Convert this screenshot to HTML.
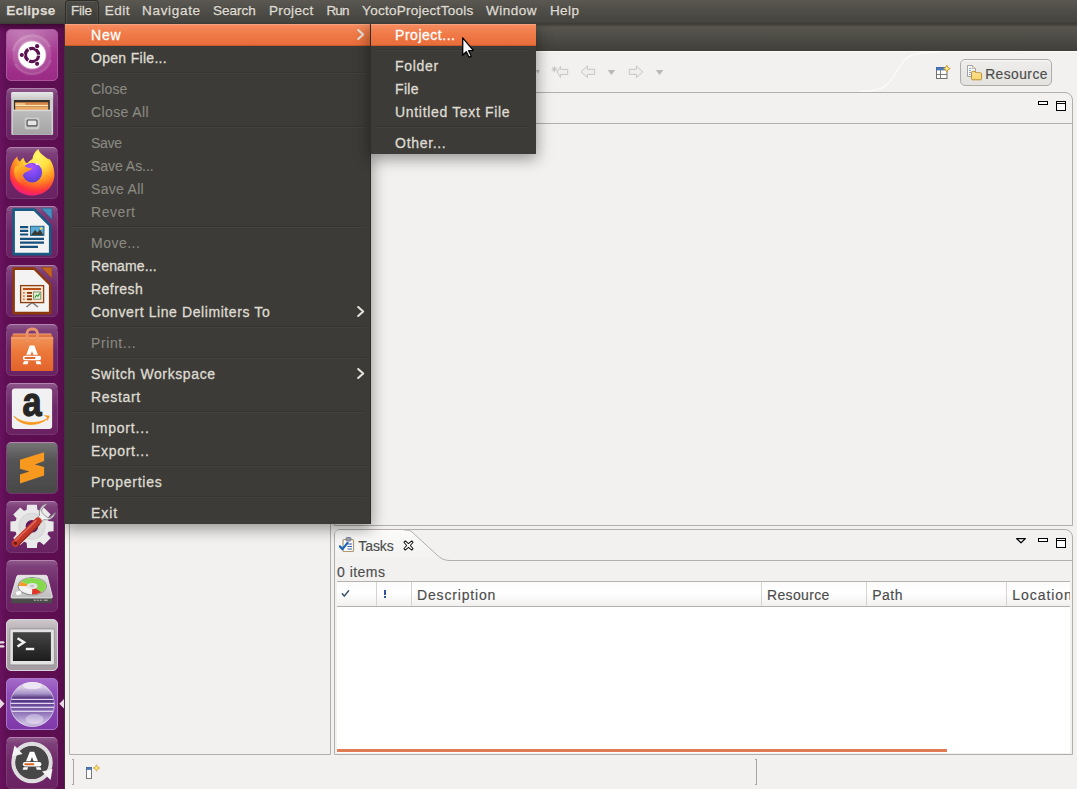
<!DOCTYPE html>
<html><head><meta charset="utf-8"><title>Eclipse</title>
<style>
*{box-sizing:border-box;margin:0;padding:0}
html,body{width:1077px;height:789px;overflow:hidden}
body{position:relative;background:#f2f1f0;font-family:"Liberation Sans",sans-serif}
.t{position:absolute;white-space:nowrap;line-height:20px;height:20px;-webkit-text-stroke:.3px}
#panel{z-index:5;position:absolute;left:0;top:0;width:1077px;height:24px;background:linear-gradient(#5a5851 0,#504e48 40%,#45443e 92%,#3a3934 100%)}
#panel .t{text-shadow:0 -1px 0 rgba(0,0,0,.35)}
#filetab{position:absolute;left:65px;top:0;width:34px;height:24px;border:1px solid #2e2d2a;border-bottom:0;border-radius:4px 4px 0 0;background:linear-gradient(#4b4a44,#3c3b37);box-shadow:inset 1px 1px 0 rgba(255,255,255,.08),inset -1px 0 0 rgba(255,255,255,.05)}
#launcher{z-index:5;position:absolute;left:0;top:24px;width:65px;height:765px;background:linear-gradient(rgba(40,5,32,.55) 0,rgba(40,5,32,0) 7px),linear-gradient(90deg,#6a1260 0,#5e0f53 6px,#5c0e50 58px,#560d4a 64px);border-right:1px solid #43303f}
.tile{position:absolute;left:6px;width:52px;height:52px;border-radius:5px;overflow:hidden}
#win{position:absolute;left:0;top:0;width:1077px;height:789px}
#win div,#win svg{position:absolute}
#win .t{-webkit-text-stroke:.15px}
#menu{position:absolute;left:65px;top:24px;width:306px;height:500px;background:#3c3b37;box-shadow:0 4px 14px 1px rgba(0,0,0,.38);border-right:1px solid #2f2e2b}
#submenu{position:absolute;left:370px;top:24px;width:166px;height:130px;background:#3c3b37;box-shadow:0 4px 14px 1px rgba(0,0,0,.38);border-left:1px solid #2f2e2b}
.hl{position:absolute;height:22px;background:linear-gradient(#f58b5e 0,#f07a48 45%,#e86d3a 100%);border-top:1px solid #f6a27e;border-bottom:1px solid #c85a2c}
.sep{position:absolute;height:2px;background:linear-gradient(#363531 1px,#43423e 1px)}
.d{-webkit-text-stroke:.1px}
.chev{position:absolute;width:8px;height:11px;overflow:visible}
.chev path{fill:none;stroke:#e6e2da;stroke-width:2.1;stroke-linecap:round;stroke-linejoin:round}
</style></head><body>
<div id="panel"><div id="filetab"></div><span class="t" style="left:6.2px;top:0.8px;font-size:13.5px;letter-spacing:0.29px;color:#dfdbd2;font-weight:bold;">Eclipse</span><span class="t" style="left:71.1px;top:0.8px;font-size:13.5px;letter-spacing:-0.28px;color:#dfdbd2;">File</span><span class="t" style="left:104.8px;top:0.8px;font-size:13.5px;letter-spacing:0.48px;color:#dfdbd2;">Edit</span><span class="t" style="left:142.1px;top:0.8px;font-size:13.5px;letter-spacing:0.67px;color:#dfdbd2;">Navigate</span><span class="t" style="left:212.9px;top:0.8px;font-size:13.5px;letter-spacing:0.03px;color:#dfdbd2;">Search</span><span class="t" style="left:269.0px;top:0.8px;font-size:13.5px;letter-spacing:0.36px;color:#dfdbd2;">Project</span><span class="t" style="left:326.4px;top:0.8px;font-size:13.5px;letter-spacing:-0.83px;color:#dfdbd2;">Run</span><span class="t" style="left:362.1px;top:0.8px;font-size:13.5px;letter-spacing:0.27px;color:#dfdbd2;">YoctoProjectTools</span><span class="t" style="left:486.1px;top:0.8px;font-size:13.5px;letter-spacing:0.50px;color:#dfdbd2;">Window</span><span class="t" style="left:549.9px;top:0.8px;font-size:13.5px;letter-spacing:0.41px;color:#dfdbd2;">Help</span></div>
<div id="launcher">
<svg width="65" height="765" viewBox="0 24 65 765" style="position:absolute;left:0;top:0">
<defs>
 <linearGradient id="tg" x1="0" y1="0" x2="0" y2="1"><stop offset="0" stop-color="#8f5a8c"/><stop offset=".12" stop-color="#7d3f79"/><stop offset=".5" stop-color="#6d2867"/><stop offset="1" stop-color="#6a2263"/></linearGradient>
 <linearGradient id="tb" x1="0" y1="0" x2="0" y2="1"><stop offset="0" stop-color="#b484b0"/><stop offset=".12" stop-color="#85498100"/><stop offset=".12" stop-color="#854981"/><stop offset="1" stop-color="#76356f"/></linearGradient>
 <g id="tile"><rect x=".5" y=".5" width="51" height="51" rx="4.500" fill="url(#tg)" stroke="url(#tb)"/></g>
 <linearGradient id="ub" x1="0" y1="0" x2="0" y2="1"><stop offset="0" stop-color="#b25ea4"/><stop offset=".5" stop-color="#a5348f"/><stop offset="1" stop-color="#9a2c85"/></linearGradient>
 <radialGradient id="ubh" cx=".3" cy=".15" r=".7"><stop offset="0" stop-color="#fff" stop-opacity=".22"/><stop offset="1" stop-color="#fff" stop-opacity="0"/></radialGradient>
 <linearGradient id="gr1" x1="0" y1="0" x2="0" y2="1"><stop offset="0" stop-color="#bdbdbd"/><stop offset="1" stop-color="#a4a4a4"/></linearGradient>
 <linearGradient id="cabt" x1="0" y1="0" x2="0" y2="1"><stop offset="0" stop-color="#e9e9e9"/><stop offset="1" stop-color="#c6c6c6"/></linearGradient>
 <radialGradient id="ff" cx=".62" cy=".14" r="1"><stop offset="0" stop-color="#fff66a"/><stop offset=".28" stop-color="#ffe040"/><stop offset=".44" stop-color="#ffb22c"/><stop offset=".56" stop-color="#ff8a22"/><stop offset=".67" stop-color="#ff5a2c"/><stop offset=".77" stop-color="#ff3044"/><stop offset=".88" stop-color="#f0207a"/><stop offset="1" stop-color="#d0109a"/></radialGradient>
 <linearGradient id="ffh" x1="0" y1="0" x2=".4" y2="1"><stop offset="0" stop-color="#ffc830"/><stop offset=".45" stop-color="#ff9a24"/><stop offset="1" stop-color="#ff5a2c"/></linearGradient>
 <radialGradient id="ffg" cx=".45" cy=".2" r=".9"><stop offset="0" stop-color="#b054ff"/><stop offset=".5" stop-color="#7a48f0"/><stop offset="1" stop-color="#5838c8"/></radialGradient>
 <linearGradient id="bag" x1="0" y1="0" x2="0" y2="1"><stop offset="0" stop-color="#f19358"/><stop offset=".4" stop-color="#ec7a3c"/><stop offset="1" stop-color="#e2632b"/></linearGradient>
 <linearGradient id="sub" x1="0" y1="0" x2="0" y2="1"><stop offset="0" stop-color="#767676"/><stop offset=".35" stop-color="#545454"/><stop offset="1" stop-color="#484848"/></linearGradient>
 <linearGradient id="trm" x1="0" y1="0" x2="0" y2="1"><stop offset="0" stop-color="#cfc8cd"/><stop offset=".15" stop-color="#bdb6bb"/><stop offset="1" stop-color="#a39ba1"/></linearGradient>
 <linearGradient id="trs" x1="0" y1="0" x2="0" y2="1"><stop offset="0" stop-color="#454545"/><stop offset="1" stop-color="#1c1c1c"/></linearGradient>
 <linearGradient id="ecl" x1="0" y1="0" x2="0" y2="1"><stop offset="0" stop-color="#a56ccb"/><stop offset=".3" stop-color="#8f4eb8"/><stop offset="1" stop-color="#7f38a8"/></linearGradient>
 <linearGradient id="sph" x1="0" y1="0" x2="0" y2="1"><stop offset="0" stop-color="#cfc0e0"/><stop offset=".12" stop-color="#d8cce8"/><stop offset=".26" stop-color="#a894c8"/><stop offset=".37" stop-color="#4a2a78"/><stop offset=".46" stop-color="#5c3c8c"/><stop offset=".62" stop-color="#7c60a8"/><stop offset=".78" stop-color="#a890cc"/><stop offset=".92" stop-color="#cdbde2"/><stop offset="1" stop-color="#b09ccc"/></linearGradient>
 <linearGradient id="hdd" x1="0" y1="0" x2="0" y2="1"><stop offset="0" stop-color="#e6e6e6"/><stop offset="1" stop-color="#bdbdbd"/></linearGradient>
</defs>
<!-- 1 ubuntu -->
<g transform="translate(6 29)">
 <rect x=".5" y=".5" width="51" height="51" rx="4.500" fill="url(#ub)" stroke="#ad55a0"/>
 <rect x="1" y="1" width="50" height="50" rx="4" fill="url(#ubh)"/>
 <circle cx="26" cy="26" r="19.500" fill="#fff" fill-opacity=".13"/>
 <path d="M7 22 A19.500 19.500 0 0 1 44 18" fill="none" stroke="#fff" stroke-opacity=".16" stroke-width="2.500"/>
 <path d="M45 31 A19.500 19.500 0 0 1 9 35" fill="none" stroke="#fff" stroke-opacity=".12" stroke-width="2.500"/>
 <circle cx="26" cy="26" r="14.400" fill="#fff" fill-opacity=".4"/>
 <circle cx="26" cy="26" r="13.600" fill="#fff"/>
 <circle cx="26.00" cy="26.00" r="6.60" fill="none" stroke="#5c1150" stroke-width="3.300" stroke-dasharray="12.72 1.10" stroke-dashoffset="-0.55"/>
 <g fill="#fff"><circle cx="15.80" cy="26.00" r="2.700"/><circle cx="31.10" cy="17.17" r="2.700"/><circle cx="31.10" cy="34.83" r="2.700"/></g>
 <g fill="#5c1150"><circle cx="15.80" cy="26.00" r="2.100"/><circle cx="31.10" cy="17.17" r="2.100"/><circle cx="31.10" cy="34.83" r="2.100"/></g>
</g>
<!-- 2 files -->
<g transform="translate(6 88)"><use href="#tile"/>
 <rect x="5.300" y="4" width="41.800" height="43.100" rx="1.500" fill="#cfcfcf"/>
 <rect x="5.300" y="4" width="41.800" height="8" rx="1.500" fill="url(#cabt)"/>
 <rect x="7.900" y="12" width="35.900" height="10" fill="#34302c"/>
 <rect x="9.200" y="14.200" width="33" height="3" fill="#d98648"/>
 <rect x="9.200" y="15.200" width="10" height="1.600" fill="#f3c88e"/>
 <rect x="9.200" y="16.900" width="33" height="1.500" fill="#fde6b4"/>
 <rect x="9.200" y="18.400" width="33" height="3.600" fill="#efa961"/>
 <rect x="6.900" y="21.800" width="38.600" height="25" rx=".8" fill="url(#gr1)"/>
 <rect x="6.900" y="21.800" width="38.600" height="1.300" fill="#d9d9d9"/>
 <rect x="19.100" y="30" width="13.900" height="10.900" rx="1.500" fill="#c9c9c9" stroke="#d8d8d8" stroke-width=".6"/>
 <rect x="21.100" y="32" width="9.900" height="5.900" rx="1" fill="#e6e6e6" stroke="#4a4a4a" stroke-width="1.100"/>
</g>
<!-- 3 firefox -->
<g transform="translate(6 147)"><use href="#tile"/>
 <path d="M26 48.500 C13 48.500 4 39 4 27.500 C4 20 6.500 14.500 10 10.800 L11.300 9.600 C11.300 12 12.300 13.800 14 14.600 C14.800 12.800 16.300 11.400 17.900 10.900 C18 13.200 19.200 15.200 21 16.300 C22.500 14.600 24.300 13.200 26.400 12 C27 7.500 29.500 4 32.300 2 C33 5 35.500 7 38 9 C40 10.600 42 12 43 12.600 C43 12 42.800 11.600 42.600 11.200 C46 14.500 48.400 20.500 48.400 27.500 C48.400 39.500 39 48.500 26 48.500Z" fill="url(#ff)"/>
 <circle cx="26.200" cy="25.600" r="9.900" fill="url(#ffg)"/>
 <path d="M9.500 19.800 C12.500 17.800 16.500 18.200 19.200 19.600 C21.600 20.800 24 21.500 26.200 21.500 C24.500 23.600 21.200 24.200 18.600 25.900 C16.200 27.500 15.800 30.300 17 33 C18 35.200 20 36.800 22.500 37.600 C14 39 8 32 8.200 24.500 C8.300 22.700 8.800 21 9.500 19.800Z" fill="url(#ffh)"/>
 <path d="M28.500 15.800 C31 15.600 33.500 16.800 35 18.800 C33.200 17.800 31.400 17.800 30.200 18.300 C30 17.300 29.400 16.400 28.500 15.800Z" fill="#ffd9f4"/>
</g>
<!-- 4 writer -->
<g transform="translate(6 206)"><use href="#tile"/>
 <path d="M7.600 3.600 H28.300 L44.200 19.600 V48.100 H7.600 Z" fill="#f3f3f3" stroke="#175a84" stroke-width="2.600" stroke-linejoin="round"/>
 <path d="M35.200 2.200 H46 V13.400 Z" fill="#4590bd" stroke="#175a84" stroke-width=".5"/>
 <path d="M31 2.500 V16.500 H44.500" fill="none" stroke="#175a84" stroke-width="0"/>
 <g stroke="#17507a" stroke-width="2.200"><path d="M14 21.200 h8.200 M14 24.900 h8.200 M14 28.500 h8.200 M14 32.800 h24 M14 36.700 h24 M14 40.800 h18"/></g>
 <rect x="24.500" y="20.200" width="13.500" height="9.300" fill="#58a9d6" stroke="#17507a" stroke-width=".8"/>
 <path d="M25 29 l4 -5 2.500 2.500 2.500 -3 3.500 5.500z" fill="#3a3a30"/>
 <circle cx="35.200" cy="22.500" r="1.300" fill="#f6e05a"/>
</g>
<!-- 5 impress -->
<g transform="translate(6 265)"><use href="#tile"/>
 <path d="M7.600 3.600 H28.300 L44.200 19.600 V48.100 H7.600 Z" fill="#f3f3f3" stroke="#8c3a0d" stroke-width="2.600" stroke-linejoin="round"/>
 <path d="M35.200 2.200 H46 V13.400 Z" fill="#c2641f" stroke="#8c3a0d" stroke-width=".5"/>
 <path d="M26.200 37.500 L20.400 42 M26.200 37.500 L32 42" stroke="#777" stroke-width="1.500"/>
 <rect x="14.600" y="20.600" width="23" height="17" fill="#fbe6d2" stroke="#8a3f12" stroke-width="1.300"/>
 <rect x="17" y="23" width="18" height="2" fill="#b5501a"/>
 <g fill="#c98a62"><rect x="17" y="27" width="1.800" height="1.800"/><rect x="17" y="30.200" width="1.800" height="1.800"/><rect x="17" y="33.400" width="1.800" height="1.800"/></g>
 <g fill="#8a3208"><rect x="21" y="27" width="5" height="1.800"/><rect x="21" y="30.200" width="5" height="1.800"/><rect x="21" y="33.400" width="5" height="1.800"/></g>
 <rect x="27.600" y="27" width="7.200" height="7.200" fill="#e6f2de" stroke="#6d8a62" stroke-width=".9"/>
 <path d="M28.800 32.600 l1.800 -2.600 1.400 1.300 1.800 -3" stroke="#2f9a2a" stroke-width="1.100" fill="none"/>
</g>
<!-- 6 software -->
<g transform="translate(6 324)"><use href="#tile"/>
 <path d="M21 18 V9.500 a4.500 4.500 0 0 1 4.500 -4.500 h1.500 a4.500 4.500 0 0 1 4.500 4.500 V18" fill="none" stroke="#e8946a" stroke-width="2.800"/>
 <path d="M7 10 H45.200 L47.200 13.500 H5Z" fill="#dd733f"/>
 <rect x="5" y="13.300" width="42.200" height="33.700" rx="1" fill="url(#bag)"/>
 <rect x="5" y="13.300" width="42.200" height="1.200" fill="#f4a77a"/>
 <path d="M7 10 H45.200" stroke="#f2a57a" stroke-width="1"/>
 <path d="M21 11 v7 M31.500 11 v7" stroke="#ea9468" stroke-width="2.800"/>
 <path d="M16.800 40.200 L23.700 21.600 H28.400 L35.400 40.200 H30.600 L26 27 L21.500 40.200Z" fill="#fff"/>
 <rect x="15.800" y="30.800" width="20.400" height="6.400" rx="3.200" fill="#e86f35"/>
 <rect x="16.800" y="31.700" width="18.400" height="4.600" rx="2.300" fill="#fff"/>
 <rect x="18.500" y="33.100" width="11" height="1.900" rx=".9" fill="#e4672e"/>
</g>
<!-- 7 amazon -->
<g transform="translate(6 383)"><use href="#tile"/>
 <rect x="5.900" y="5.600" width="40.200" height="40.300" rx="3" fill="#f1f1f1"/>
 <text x="26" y="0" font-family="Liberation Sans" font-weight="bold" font-size="35" text-anchor="middle" fill="#262626" stroke="#262626" stroke-width="1.100" transform="translate(26 33.100) scale(.98 1.150) translate(-26 0)">a</text>
 <path d="M8 33.300 C16 40.800 32 41.600 41.500 35.600 C32 44 15 43.500 8 33.300Z" fill="#f7981d" stroke="#f7981d" stroke-width=".8" stroke-linejoin="round"/>
 <path d="M37.400 32 L43.800 32.800 L41.300 38.400 C41.600 36.600 41.200 35.200 40.500 34.300 C39.700 33.300 38.600 32.500 37.400 32Z" fill="#f7981d"/>
</g>
<!-- 8 sublime -->
<g transform="translate(6 442)">
 <rect x=".5" y=".5" width="51" height="51" rx="4.500" fill="url(#sub)" stroke="url(#tb)"/>
 <path d="M38.100 10.200 L14 17.800 V26.700 L23.400 29.500 L14 32.400 V41.500 L38.100 33.600 V25 L28.700 22.400 L38.100 19.100Z" fill="#f7991f"/>
 <path d="M14 26.700 L23.400 29.500 L28.700 22.400 L38.100 25 V27 L14 24Z" fill="#e88a12" fill-opacity=".0"/>
</g>
<!-- 9 settings -->
<g transform="translate(6 501)"><use href="#tile"/>
 <g transform="translate(26 25.300)">
  <g fill="#eaeaea">
   <circle r="17.300"/>
   <g id="th"><path d="M-4.900 -21.600 H4.900 L5.600 -14 H-5.600Z"/></g>
   <use href="#th" transform="rotate(45)"/><use href="#th" transform="rotate(90)"/><use href="#th" transform="rotate(135)"/><use href="#th" transform="rotate(180)"/><use href="#th" transform="rotate(225)"/><use href="#th" transform="rotate(270)"/><use href="#th" transform="rotate(315)"/>
  </g>
  <circle r="13.500" fill="#d6d6d6"/>
  <circle r="12.300" fill="#dedede"/>
  <circle r="6.300" fill="#5e185a"/>
 </g>
 <g transform="translate(39.600 12.600) rotate(-45) scale(1.120)">
  <path d="M-11 -2.600 H-5 A8.400 8.400 0 0 1 6 -6 L6.500 -5.400 H1.500 A3 3 0 0 0 -1.600 -2.800 V2.800 A3 3 0 0 0 1.500 5.400 H6.500 L6 6 A8.400 8.400 0 0 1 -5 2.600 H-11Z" fill="#f1f1f1" stroke="#8f8f8f" stroke-width=".8"/>
 </g>
 <path d="M9.300 42.300 L32 20" stroke="#c4382b" stroke-width="7.300" stroke-linecap="round"/>
 <path d="M9.300 39.800 L30 19.600" stroke="#e0685a" stroke-width="1.600" stroke-linecap="round"/>
 <path d="M12.500 44 L33.500 23.300" stroke="#9c2a20" stroke-width="1.400" stroke-linecap="round"/>
 <circle cx="9.400" cy="42.200" r="1.700" fill="#6e1a14"/>
</g>
<!-- 10 disk -->
<g transform="translate(6 560)"><use href="#tile"/>
 <path d="M5.300 37 H46.100 V41.700 a1.600 1.600 0 0 1 -1.600 1.600 H6.900 a1.600 1.600 0 0 1 -1.600 -1.600Z" fill="#4b4b49"/>
 <path d="M13.500 15.300 H39.600 a1.800 1.800 0 0 1 1.700 1.200 L46.300 36.300 a1.300 1.300 0 0 1 -1.300 1.700 H6.400 a1.300 1.300 0 0 1 -1.300 -1.700 L10.800 16.500 a1.800 1.800 0 0 1 1.700 -1.200Z" fill="url(#hdd)" stroke="#f4f4f4" stroke-width=".8"/>
 <ellipse cx="26.300" cy="26.300" rx="14.600" ry="9.200" fill="#8f8f8d"/>
 <ellipse cx="26.400" cy="26.200" rx="13.600" ry="8.200" fill="#f3f3f3"/>
 <path d="M26.400 26.200 L15 21.800 A13.600 8.200 0 0 1 40 26.200 A13.600 8.200 0 0 1 35.500 32.300 Z" fill="#86d84c"/>
 <path d="M26.400 26.200 L12.800 26 A13.600 8.200 0 0 1 15 21.800Z" fill="#f59a2a"/>
 <path d="M26.400 26.200 L35.500 32.300 A13.600 8.200 0 0 1 26 34.400Z" fill="#df3528"/>
 <ellipse cx="26.200" cy="26" rx="5.400" ry="3.100" fill="#e4e4e4"/>
 <ellipse cx="26.200" cy="26" rx="2.200" ry="1.200" fill="#c2c2c2"/>
 <rect x="10" y="31.200" width="5.200" height="3.800" rx="1" fill="#fbfbfb" transform="rotate(-15 12.500 33)"/>
 <g fill="#9c9c9a"><rect x="27.800" y="39.400" width="2" height="1.700" rx=".4"/><rect x="30.800" y="39.400" width="2" height="1.700" rx=".4"/><rect x="33.800" y="39.400" width="2" height="1.700" rx=".4"/><rect x="37.600" y="39.400" width="4.200" height="1.700" rx=".4"/></g>
</g>
<!-- 11 terminal -->
<g transform="translate(6 619)">
 <rect x=".5" y=".5" width="51" height="51" rx="4.500" fill="url(#trm)" stroke="#dcd2da"/>
 <rect x="3.900" y="9.900" width="44.500" height="36" rx="1.500" fill="#e3e3e3" stroke="#8e8e8e" stroke-width=".8"/>
 <rect x="6.900" y="13.200" width="38" height="28.800" fill="url(#trs)"/>
 <path d="M11.500 19.300 L18 23.300 L11.500 27.500" fill="none" stroke="#f2f2f2" stroke-width="2.500"/>
 <path d="M19.800 30 H28.200" stroke="#f2f2f2" stroke-width="2.400"/>
</g>
<path d="M0 641.200 h3.600 l1.200 1.150 l-1.200 1.150 h-3.600z M0 645.300 h3.600 l1.200 1.150 l-1.200 1.150 h-3.600z" fill="#e8dfe6"/>
<!-- 12 eclipse -->
<g transform="translate(6 678)">
 <rect x=".5" y=".5" width="51" height="51" rx="4.500" fill="url(#ecl)" stroke="#a877cc"/>
 <circle cx="26.400" cy="26.400" r="22.500" fill="url(#sph)"/>
 <circle cx="26.400" cy="26.400" r="22" fill="none" stroke="#e9def2" stroke-opacity=".6" stroke-width="1"/>
 <ellipse cx="26.400" cy="7.600" rx="9.500" ry="3.600" fill="#fff" fill-opacity=".55"/>
 <ellipse cx="28.500" cy="41" rx="9" ry="5" fill="#fff" fill-opacity=".35"/>
 <g fill="#e2d6f2"><rect x="5.3" y="20.75" width="42.3" height="1.300"/><rect x="4.7" y="24.75" width="43.4" height="1.300"/><rect x="4.9" y="28.65" width="43.0" height="1.300"/><rect x="5.8" y="32.65" width="41.2" height="1.300"/></g>
</g>
<path d="M0 699 L4.500 703.700 L0 708.400Z" fill="#e6dbe6"/>
<path d="M64 699 L59.300 703.700 L64 708.400Z" fill="#e6dbe6"/>
<!-- 13 updater -->
<g transform="translate(6 737)"><use href="#tile"/>
 <circle cx="26" cy="25.500" r="18.600" fill="none" stroke="#dedede" stroke-width="4.200"/>
 <circle cx="26" cy="25.500" r="16.600" fill="#474747"/>
 <path d="M8.500 8.500 L16.500 17 L6 19.500Z" fill="#f4f4f4"/>
 <path d="M44.500 43 L36 34.500 L46.500 32Z" fill="#f4f4f4"/>
 <path d="M16.600 32.800 L23.800 14.800 H28.200 L35.400 32.800 H30.800 L26 20 L21.200 32.800Z" fill="#fff"/>
 <rect x="15.800" y="24.200" width="20.400" height="6" rx="3" fill="#474747"/>
 <rect x="16.800" y="25.100" width="18.600" height="4.300" rx="2.100" fill="#fff"/>
 <rect x="18.300" y="26.300" width="10" height="1.900" rx=".9" fill="#d8661f"/>
</g>
</svg>
</div>

<div id="win"><div id="tbar" style="left:65px;top:24px;width:1012px;height:27px;background:linear-gradient(#3d3c37 0,#57554d 3px,#55534c 6px,#403f3a 100%)"></div>
<div style="left:65px;top:51px;width:1012px;height:1px;background:#fbfbfa"></div>
<!-- toolbar icons (disabled) -->
<svg style="left:534px;top:64px" width="136" height="16" viewBox="0 0 136 16">
 <g fill="#efeeec" stroke="#c7c6c4" stroke-width="1" stroke-linejoin="round">
  <path d="M1.800 6 h4 l-2 4 z" fill="#bfbebc" stroke="none"/>
  <path d="M23 8 L26.500 2.500 V5.300 H33.700 V10.500 H26.500 V13.500 Z"/>
  <path d="M18.300 3 l4.200 4.400 M22.500 3 l-4.200 4.400 M20.400 2.200 v6 M17.600 5.200 h5.600" stroke="#bcbbb9" stroke-width=".8" fill="none"/>
  <path d="M47 7.800 L53.400 2 V5.300 H60.600 V10.400 H53.400 V13.600 Z"/>
  <path d="M73.700 6 h7.500 l-3.750 4.900 z" fill="#b9b8b6" stroke="none"/>
  <path d="M108.800 7.800 L102.400 2 V5.300 H95.300 V10.400 H102.400 V13.600 Z"/>
  <path d="M121.800 6 h7.500 l-3.750 4.900 z" fill="#b9b8b6" stroke="none"/>
 </g>
</svg>
<!-- toolbar curve -->
<svg style="left:860px;top:51px" width="80" height="42" viewBox="0 0 80 42"><path d="M0 40.500 C26 40.500 30 32 37 20 C44 8 48 1.500 70 1.500 L80 1.500" fill="none" stroke="#fbfbfa" stroke-width="1.400"/></svg>
<!-- open perspective icon -->
<svg style="left:935px;top:64px" width="16" height="16" viewBox="0 0 16 16">
 <rect x="1.500" y="3.500" width="10.500" height="11" fill="#fdfdfd" stroke="#6f716c"/>
 <rect x="1.500" y="3.500" width="10.500" height="2.500" fill="#4a7ac2" stroke="#3a64a8" stroke-width=".6"/>
 <path d="M5.500 6 v8.500 M1.500 10.500 h10.500" stroke="#7a7c77" fill="none"/>
 <path d="M11.800 1.200 l1.100 2.300 2.300 1.100 -2.300 1.100 -1.100 2.300 -1.100 -2.300 -2.300 -1.100 2.300 -1.100z" fill="#fff0a0" stroke="#c99a1c" stroke-width=".9"/>
</svg>
<!-- Resource button -->
<div style="left:960px;top:59px;width:92px;height:27px;border:1px solid #aeaca8;border-radius:5px;background:linear-gradient(#efeeec,#e3e2df);box-shadow:inset 0 1px 0 #f8f8f7"></div>
<svg style="left:966px;top:63px" width="18" height="18" viewBox="0 0 18 18">
 <path d="M1.500 2.500 h5 l3 3 v8 h-8 z" fill="#fbfbfb" stroke="#9a9a98" stroke-width=".9"/>
 <path d="M6.500 2.500 v3 h3" fill="#eadfc8" stroke="#b0a890" stroke-width=".7"/>
 <path d="M3 5.500 h2.500 M3 7.500 h2 M3 9.500 h2 M3 11.500 h1.500" stroke="#7f9fd0" stroke-width=".9"/>
 <path d="M5.500 9.300 q0 -1 1 -1 h2.500 l1 1.500 h4.500 q1 0 1 1 v5 q0 1 -1 1 h-8 q-1 0 -1 -1 z" fill="#f8d978" stroke="#b8862a" stroke-width=".9" stroke-linejoin="round"/>
 <path d="M6.500 11 h8" stroke="#fbe6a2" stroke-width="1"/>
</svg>
<!-- editor area -->
<div style="left:334px;top:92px;width:739px;height:434px;border:1px solid #b1afac;border-radius:6px 8px 0 0;background:#f2f1f0"></div>
<div style="left:335px;top:123px;width:737px;height:1px;background:#b1afac"></div>
<div style="left:1038px;top:101px;width:10px;height:4px;border:1px solid #000;background:#fff"></div>
<div style="left:1056px;top:101px;width:10px;height:10px;border:1px solid #000;background:linear-gradient(#fff 1px,#000 1px,#000 2px,#fff 2px)"></div>
<!-- left panel (mostly hidden) -->
<div style="left:69px;top:92px;width:262px;height:663px;border:1px solid #b1afac;border-radius:6px 6px 0 0;background:#f2f1f0"></div>
<!-- tasks panel -->
<div style="left:334px;top:529px;width:739px;height:226px;border:1px solid #b1afac;border-radius:6px 8px 0 0;background:#f2f1f0"></div>
<svg style="left:335px;top:530px" width="737" height="32" viewBox="0 0 737 32">
 <defs><linearGradient id="tabg" x1="0" y1="0" x2="0" y2="1"><stop offset="0" stop-color="#fbfbfa"/><stop offset="1" stop-color="#f2f1f0"/></linearGradient></defs><path d="M0 30.500 V5 Q0 0 5 0 H69 C73 0 75 .5 77 2 L102 25 C106 28.500 109 30.500 115 30.500 Z" fill="url(#tabg)" stroke="none"/>
 <path d="M69 0 C73 0 75 .5 77 2 L102 25 C106 28.500 109 30.500 115 30.500 H737" fill="none" stroke="#b1afac" stroke-width="1"/>
</svg>
<!-- tasks icon -->
<svg style="left:339px;top:536px" width="16" height="17" viewBox="0 0 16 17">
 <rect x="4" y="3.500" width="10.500" height="12" rx="1" fill="#fdfdfd" stroke="#b09a72" stroke-width="1.200"/>
 <rect x="7" y="1.500" width="5" height="3.500" rx="1" fill="#9aa0b0" stroke="#70768a" stroke-width=".8"/>
 <path d="M8.500 8 h4.500 M8.500 10.500 h4.500 M8.500 13 h4.500" stroke="#3d5fa8" stroke-width="1"/>
 <path d="M.8 10.400 l2.700 2.700 5 -6.200" stroke="#1c63b8" stroke-width="2.200" fill="none" stroke-linecap="round" stroke-linejoin="round"/>
</svg>
<!-- close X -->
<svg style="left:402.500px;top:539.500px" width="11" height="11" viewBox="0 0 12 12">
 <path d="M1 2.500 L2.500 1 L6 4 L9.500 1 L11 2.500 L8 6 L11 9.500 L9.500 11 L6 8 L2.500 11 L1 9.500 L4 6 Z" fill="#fff" stroke="#111" stroke-width="1.100" stroke-linejoin="round"/>
</svg>
<!-- view menu / min / max -->
<svg style="left:1015px;top:537px" width="12" height="8" viewBox="0 0 12 8"><path d="M1.600 1.600 H10.400 L6 5.800 Z" fill="#fff" stroke="#000" stroke-width="1.200" stroke-linejoin="round"/></svg>
<div style="left:1038px;top:538px;width:10px;height:4px;border:1px solid #000;background:#fff"></div>
<div style="left:1056px;top:538px;width:10px;height:10px;border:1px solid #000;background:linear-gradient(#fff 1px,#000 1px,#000 2px,#fff 2px)"></div>
<!-- table -->
<div style="left:337px;top:606px;width:733px;height:147px;background:#fff"></div>
<div style="left:337px;top:581px;width:733px;height:26px;border-top:1px solid #b4b2af;border-bottom:1px solid #b4b2af;background:linear-gradient(#fbfbfb,#ffffff 45%,#f1f0ef)"></div>
<div style="left:376px;top:582px;width:1px;height:24px;background:#d5d4d2"></div>
<div style="left:411px;top:582px;width:1px;height:24px;background:#d5d4d2"></div>
<div style="left:761px;top:582px;width:1px;height:24px;background:#d5d4d2"></div>
<div style="left:866px;top:582px;width:1px;height:24px;background:#d5d4d2"></div>
<div style="left:1006px;top:582px;width:1px;height:24px;background:#d5d4d2"></div>
<svg style="left:341px;top:589px" width="10" height="9" viewBox="0 0 10 9"><path d="M1.300 4.800 l2 2.300 L7.600 1.800" fill="none" stroke="#3b5070" stroke-width="1.500" stroke-linecap="round" stroke-linejoin="round"/></svg>
<div style="left:384px;top:590px;width:2px;height:5px;background:#2f5597"></div>
<div style="left:384px;top:596px;width:2px;height:2px;background:#2f5597"></div>
<div style="left:337px;top:749px;width:610px;height:3px;background:#e07b53"></div>
<!-- status bar -->
<div style="left:72px;top:759px;width:2px;height:26px;border-right:1px solid #a9a7a4;border-top:1px solid #a9a7a4;border-bottom:1px solid #a9a7a4"></div>
<div style="left:755px;top:759px;width:2px;height:26px;border-right:1px solid #a9a7a4;border-top:1px solid #a9a7a4;border-bottom:1px solid #a9a7a4"></div>
<svg style="left:85px;top:764px" width="16" height="16" viewBox="0 0 16 16">
 <rect x="1.500" y="3.500" width="5" height="11" fill="#fdfdfd" stroke="#7a7a78"/>
 <rect x="1.500" y="3.500" width="5" height="2" fill="#4a7ac2" stroke="#3a64a8" stroke-width=".6"/>
 <path d="M11.500 0.800 l1 2.200 2.200 1 -2.200 1 -1 2.200 -1 -2.200 -2.200 -1 2.200 -1z" fill="#ffe680" stroke="#c99a1c" stroke-width=".7"/>
</svg>
<span class="t" style="left:985.2px;top:64.8px;font-size:13.8px;letter-spacing:0.46px;color:#4c4c4c;">Resource</span><span class="t" style="left:358.3px;top:535.5px;font-size:14.0px;letter-spacing:-0.07px;color:#4c4c4c;">Tasks</span><span class="t" style="left:337.1px;top:561.9px;font-size:14.0px;letter-spacing:0.45px;color:#4c4c4c;">0 items</span><span class="t" style="left:417.0px;top:584.7px;font-size:14.0px;letter-spacing:0.83px;color:#4c4c4c;">Description</span><span class="t" style="left:767.0px;top:584.7px;font-size:14.0px;letter-spacing:0.34px;color:#4c4c4c;">Resource</span><span class="t" style="left:872.2px;top:584.7px;font-size:14.0px;letter-spacing:0.50px;color:#4c4c4c;">Path</span><div style="position:absolute;left:1008px;top:582px;width:62px;height:24px;overflow:hidden"><span class="t" style="left:4.3px;top:2.7px;font-size:14.0px;letter-spacing:0.94px;color:#4c4c4c;">Location</span></div></div>
<div id="menu"><div class="hl" style="left:0;top:0;width:305px"></div></div><div class="sep" style="left:71px;width:295px;top:72px"></div><div class="sep" style="left:71px;width:295px;top:126px"></div><div class="sep" style="left:71px;width:295px;top:226px"></div><div class="sep" style="left:71px;width:295px;top:326px"></div><div class="sep" style="left:71px;width:295px;top:357px"></div><div class="sep" style="left:71px;width:295px;top:411px"></div><div class="sep" style="left:71px;width:295px;top:465px"></div><div class="sep" style="left:71px;width:295px;top:496px"></div><span class="t" style="left:91.0px;top:24.5px;font-size:14.0px;letter-spacing:0.80px;color:#ffffff;">New</span><span class="t" style="left:91.0px;top:47.5px;font-size:14.0px;letter-spacing:0.30px;color:#dfdbd2;">Open File...</span><span class="t d" style="left:91.0px;top:78.5px;font-size:14.0px;letter-spacing:0.13px;color:#8b8982;">Close</span><span class="t d" style="left:91.0px;top:101.5px;font-size:14.0px;letter-spacing:0.38px;color:#8b8982;">Close All</span><span class="t d" style="left:91.0px;top:132.5px;font-size:14.0px;letter-spacing:-0.27px;color:#8b8982;">Save</span><span class="t d" style="left:91.0px;top:155.5px;font-size:14.0px;letter-spacing:-0.04px;color:#8b8982;">Save As...</span><span class="t d" style="left:91.0px;top:178.5px;font-size:14.0px;letter-spacing:0.30px;color:#8b8982;">Save All</span><span class="t d" style="left:91.0px;top:201.5px;font-size:14.0px;letter-spacing:0.55px;color:#8b8982;">Revert</span><span class="t d" style="left:91.0px;top:232.5px;font-size:14.0px;letter-spacing:0.50px;color:#8b8982;">Move...</span><span class="t" style="left:91.0px;top:255.5px;font-size:14.0px;letter-spacing:0.13px;color:#dfdbd2;">Rename...</span><span class="t" style="left:91.0px;top:278.5px;font-size:14.0px;letter-spacing:0.46px;color:#dfdbd2;">Refresh</span><span class="t" style="left:91.0px;top:301.5px;font-size:14.0px;letter-spacing:0.59px;color:#dfdbd2;">Convert Line Delimiters To</span><span class="t d" style="left:91.0px;top:332.5px;font-size:14.0px;letter-spacing:0.59px;color:#8b8982;">Print...</span><span class="t" style="left:91.0px;top:363.5px;font-size:14.0px;letter-spacing:0.61px;color:#dfdbd2;">Switch Workspace</span><span class="t" style="left:91.0px;top:386.5px;font-size:14.0px;letter-spacing:0.68px;color:#dfdbd2;">Restart</span><span class="t" style="left:91.0px;top:417.5px;font-size:14.0px;letter-spacing:0.81px;color:#dfdbd2;">Import...</span><span class="t" style="left:91.0px;top:440.5px;font-size:14.0px;letter-spacing:0.71px;color:#dfdbd2;">Export...</span><span class="t" style="left:91.0px;top:471.5px;font-size:14.0px;letter-spacing:0.78px;color:#dfdbd2;">Properties</span><span class="t" style="left:91.0px;top:502.5px;font-size:14.0px;letter-spacing:0.95px;color:#dfdbd2;">Exit</span>
<svg class="chev" style="left:357px;top:29px"><path d="M1.2 1 L6.2 5.5 L1.2 10"/></svg><svg class="chev" style="left:357px;top:306px"><path d="M1.2 1 L6.2 5.5 L1.2 10"/></svg><svg class="chev" style="left:357px;top:368px"><path d="M1.2 1 L6.2 5.5 L1.2 10"/></svg>
<div id="submenu"><div class="hl" style="left:0;top:0;width:165px"></div></div><div class="sep" style="left:376px;width:152px;top:49px"></div><div class="sep" style="left:376px;width:152px;top:126px"></div><span class="t" style="left:395.1px;top:24.5px;font-size:14.0px;letter-spacing:0.51px;color:#ffffff;">Project...</span><span class="t" style="left:395.1px;top:55.5px;font-size:14.0px;letter-spacing:0.68px;color:#dfdbd2;">Folder</span><span class="t" style="left:395.1px;top:78.5px;font-size:14.0px;letter-spacing:0.28px;color:#dfdbd2;">File</span><span class="t" style="left:395.1px;top:101.5px;font-size:14.0px;letter-spacing:0.66px;color:#dfdbd2;">Untitled Text File</span><span class="t" style="left:395.1px;top:132.5px;font-size:14.0px;letter-spacing:0.67px;color:#dfdbd2;">Other...</span>
<svg style="position:absolute;left:460px;top:35px;overflow:visible" width="16" height="24" viewBox="0 0 16 24"><path d="M2.700 2.800 V20.300 L6.300 16.800 L9 22.300 L11.300 21.200 L8.700 15.700 L13.300 15.300 Z" fill="#f6f6f6" stroke="#000" stroke-width="1.300" stroke-linejoin="round"/></svg>
</body></html>
